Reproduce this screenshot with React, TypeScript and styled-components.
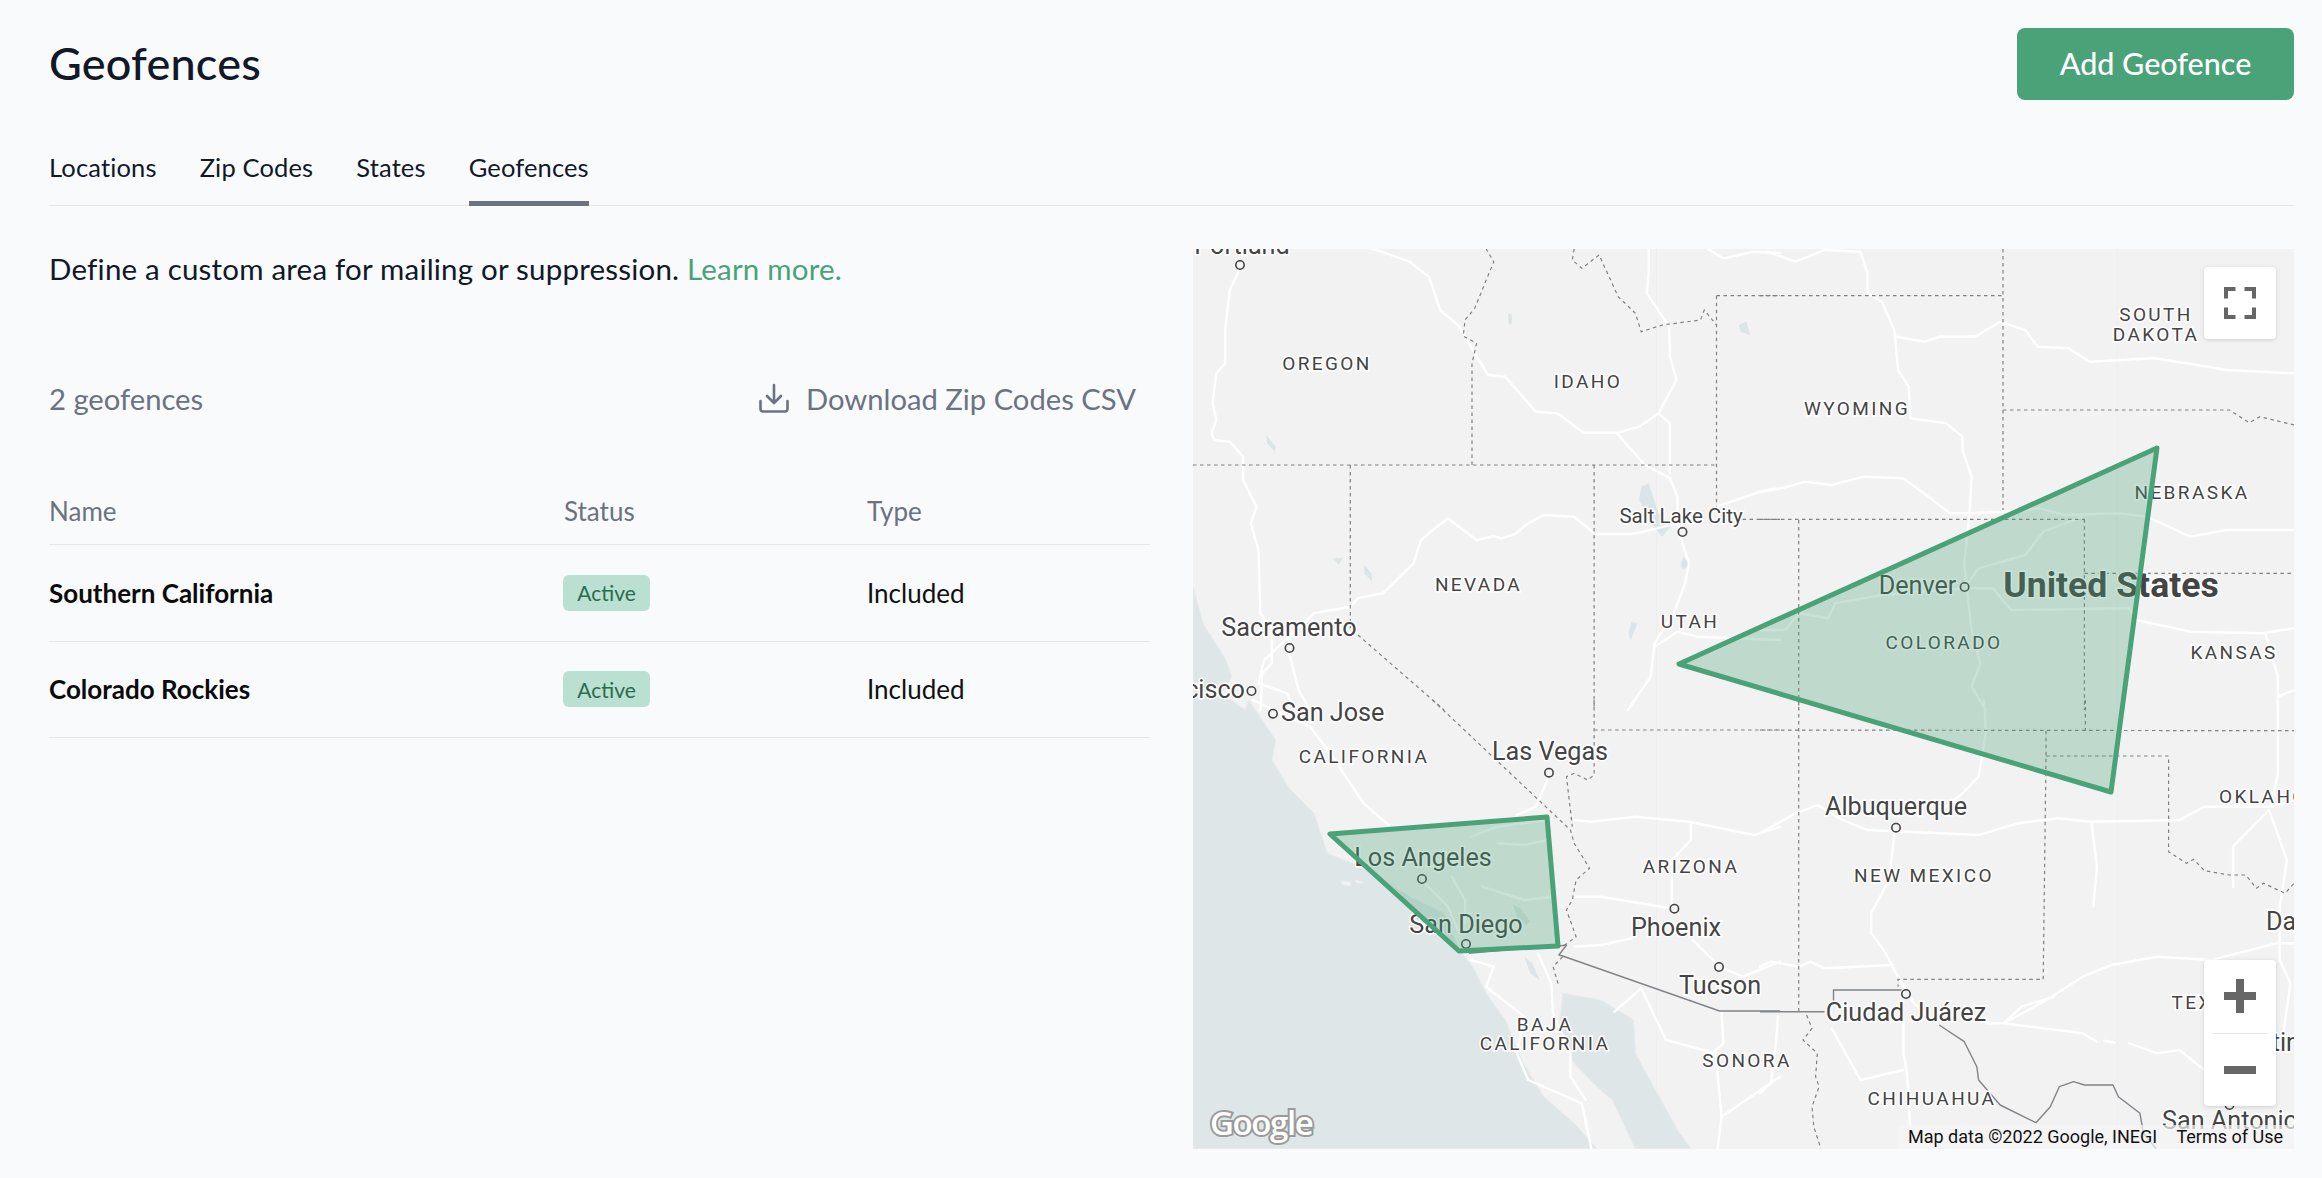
import React from 'react';
import styled, { createGlobalStyle } from 'styled-components';

const Global = createGlobalStyle`
  html, body { margin: 0; padding: 0; background: #f9fafc; }
  body { font-family: Lato, "Open Sans", sans-serif; color: #111827; overflow: hidden; }
  * { box-sizing: border-box; }
`;

const Page = styled.div`
  width: 2322px;
  height: 1178px;
  padding: 28px 28px 29px 49px;
  display: flex;
  flex-direction: column;
`;
const Header = styled.header`
  display: flex;
  justify-content: space-between;
  align-items: center;
  height: 72px;
`;
const Title = styled.h1`
  margin: 0 0 3px;
  font-size: 45px;
  font-weight: 500;
  color: #111827;
  letter-spacing: 0.2px;
`;
const PrimaryButton = styled.button`
  width: 277px;
  height: 72px;
  padding: 0 0 3px;
  border: 0;
  border-radius: 8px;
  background: #4aa278;
  color: #fff;
  font: 500 30.5px Lato, sans-serif;
`;
const Tabs = styled.nav`
  display: flex;
  gap: 43px;
  height: 58px;
  margin-top: 48px;
  border-bottom: 1px solid #e5e7eb;
`;
const Tab = styled.a<{ $active?: boolean }>`
  height: 58px;
  padding-top: 2px;
  font-size: 25.5px;
  letter-spacing: 0.15px;
  line-height: 34px;
  color: #111827;
  border-bottom: 5px solid ${p => (p.$active ? '#6b7280' : 'transparent')};
`;
const Body = styled.main`
  flex: 1;
  display: grid;
  grid-template-columns: 1101px 1101px;
  column-gap: 43px;
  margin-top: 43px;
  min-height: 0;
`;
const Left = styled.section`
  display: flex;
  flex-direction: column;
`;
const Intro = styled.p`
  margin: -2px 0 0;
  height: 44px;
  font-size: 29.5px;
  letter-spacing: 0.2px;
  line-height: 44px;
  color: #111827;
`;
const Learn = styled.a`
  color: #4aa278;
`;
const Toolbar = styled.div`
  display: flex;
  justify-content: space-between;
  align-items: center;
  height: 44px;
  margin-top: 85px;
  padding-right: 14px;
  font-size: 29.2px;
  color: #6b7280;
`;
const Download = styled.span`
  display: flex;
  align-items: center;
  gap: 17px;
`;
const Row = styled.div<{ $head?: boolean }>`
  display: grid;
  grid-template-columns: 515px 303px 1fr;
  align-items: ${p => (p.$head ? 'end' : 'center')};
  height: ${p => (p.$head ? '100px' : '96.5px')};
  padding-bottom: ${p => (p.$head ? '17px' : '0')};
  border-bottom: 1px solid #e5e7eb;
  font-size: 26px;
  color: ${p => (p.$head ? '#6b7280' : '#111')};
`;
const TableWrap = styled.div`
  margin-top: 25px;
`;
const Name = styled.span`
  font-weight: 700;
  color: #0b0b0b;
`;
const Badge = styled.span`
  display: inline-flex;
  align-items: center;
  justify-content: center;
  width: 87px;
  height: 36px;
  margin-left: -1px;
  border-radius: 6px;
  background: #b9e0d0;
  color: #2c6b4e;
  font-size: 21px;
`;
const MapPanel = styled.section`
  position: relative;
  overflow: hidden;
  background: #f2f2f2;
  height: 900px;
`;
const MapSvg = styled.svg`
  display: block;
  width: 1101px;
  height: 900px;
`;
const Label = styled.text<{ $kind: 'state' | 'city' | 'small' | 'country' }>`
  font-family: Roboto, sans-serif;
  dominant-baseline: central;
  fill: #444;
  stroke: #fff;
  stroke-width: 3px;
  paint-order: stroke;
  font-size: ${p => ({ state: 19, city: 25.2, small: 20.5, country: 35.6 })[p.$kind]}px;
  font-weight: ${p => (p.$kind === 'country' ? 700 : 450)};
  letter-spacing: ${p => (p.$kind === 'state' ? '2.4px' : '0')};
`;
const GoogleMark = styled.text`
  font-family: "Open Sans", sans-serif;
  font-size: 33px;
  font-weight: 600;
  letter-spacing: -1.4px;
  fill: #fff;
  stroke: #9a9a9a;
  stroke-width: 4px;
  paint-order: stroke;
`;
const ControlCard = styled.div`
  position: absolute;
  right: 18px;
  width: 72px;
  background: #fff;
  border-radius: 4px;
  box-shadow: 0 1px 4px rgba(0, 0, 0, 0.15);
  display: flex;
  flex-direction: column;
  align-items: center;
`;
const FullscreenCard = styled(ControlCard)`
  top: 18px;
  height: 72px;
  justify-content: center;
`;
const ZoomCard = styled(ControlCard)`
  bottom: 43px;
  height: 146px;
`;
const ZoomBtn = styled.div`
  flex: 1;
  width: 100%;
  display: flex;
  align-items: center;
  justify-content: center;
`;
const ZoomRule = styled.div`
  width: 54px;
  height: 1px;
  background: #e6e6e6;
`;
const Attribution = styled.div`
  position: absolute;
  right: 0;
  bottom: 0;
  height: 24px;
  width: 396px;
  padding: 0 11px 2px 10px;
  display: flex;
  justify-content: space-between;
  align-items: center;
  background: rgba(245, 245, 245, 0.7);
  font: 400 18px Roboto, sans-serif;
  color: #111;
  white-space: nowrap;
`;

type Pt = [number, number];
const frame = (ox: number, oy: number, sx: number) => (v: number[]): Pt[] => {
  const out: Pt[] = [];
  for (let i = 0; i < v.length; i += 2) out.push([ox + v[i] / sx, oy + v[i + 1] / 3]);
  return out;
};
const z3 = frame(1180, 230, 2.613);
const z4 = frame(1760, 230, 2.79);
const z5 = frame(1180, 700, 2.613);
const z6 = frame(1760, 700, 2.79);
const d = (p: Pt[], close = false) =>
  'M' + p.map(q => q[0].toFixed(1) + ' ' + q[1].toFixed(1)).join('L') + (close ? 'Z' : '');

const water = [
  d([...z3([34, 1070, 60, 1180, 120, 1290, 135, 1340, 110, 1390, 170, 1440]),
     ...z5([180, 0, 250, 120, 240, 180, 285, 265, 350, 340, 385, 460, 450, 490, 520, 530, 600, 590, 690, 640, 730, 750, 765, 800, 800, 880, 850, 960, 895, 1085, 950, 1190, 1030, 1270, 1090, 1346, 34, 1346])], true),
  d(z5([1000, 880, 1100, 900, 1185, 960, 1190, 1060, 1235, 1155, 1300, 1290, 1335, 1346, 1190, 1346, 1130, 1200, 1090, 1160, 1030, 1090, 990, 1000]), true),
];
const lakes = [
  d(z3([1205, 770, 1225, 760, 1250, 850, 1285, 885, 1260, 920, 1230, 880, 1200, 810]), true),
  d(z3([1315, 980, 1332, 1000, 1315, 1020, 1308, 1005]), true),
  d(z3([225, 615, 250, 650, 248, 665, 228, 640]), true),
  d(z3([480, 1005, 500, 1030, 502, 1055, 482, 1030]), true),
  d(z3([400, 985, 425, 985, 415, 1005]), true),
  d(z3([858, 250, 868, 255, 866, 285, 858, 280]), true),
  d(z3([1180, 1175, 1195, 1180, 1178, 1230, 1172, 1210]), true),
  d(z4([1455, 0, 1490, 0, 1490, 60, 1478, 30]), true),
  d(z5([870, 615, 890, 625, 915, 665, 905, 675, 880, 650]), true),
  d(z5([900, 770, 920, 790, 940, 840, 915, 820]), true),
  d(z3([1460, 285, 1480, 275, 1490, 315, 1465, 305]), true),
];
const islands = [
  d(z5([420, 545, 445, 545, 445, 558, 425, 555]), true),
  d(z5([458, 540, 485, 548, 462, 550]), true),
];
const roads = [
  z3([158, 110, 130, 180, 118, 300, 118, 400, 95, 430, 85, 520, 95, 570, 82, 610, 90, 630, 130, 635, 165, 680, 165, 750, 200, 830, 185, 880, 205, 960, 210, 1150, 240, 1200, 240, 1300, 215, 1330, 210, 1440]),
  z3([450, 50, 500, 55, 600, 95, 650, 140, 680, 240, 730, 290, 765, 360, 805, 435, 850, 440, 930, 545, 985, 550, 1055, 608, 1145, 608, 1200, 590, 1250, 550, 1280, 580, 1280, 730]),
  z3([1140, 608, 1215, 705, 1280, 745, 1300, 800, 1300, 870, 1310, 930, 1330, 1000, 1320, 1060, 1290, 1150, 1240, 1240, 1230, 1340, 1170, 1440]),
  z3([1250, 550, 1298, 450, 1280, 380, 1278, 290, 1220, 190, 1225, 120, 1225, 57]),
  z3([1300, 880, 1210, 905, 1180, 912, 1085, 912, 1030, 860, 950, 855, 910, 880, 875, 912, 840, 925, 820, 918, 775, 930, 700, 865, 660, 900, 630, 930, 610, 1000, 530, 1090, 465, 1105, 445, 1130, 350, 1150, 285, 1220, 285, 1270, 310, 1380, 340, 1440]),
  z3([1240, 1250, 1300, 1205, 1350, 1220, 1568, 1230]),
  z3([1402, 830, 1530, 780, 1568, 775]),
  z3([1380, 57, 1420, 85, 1500, 65, 1568, 70]),
  z3([285, 1220, 220, 1290, 205, 1360, 280, 1390, 300, 1440]),
  z4([0, 785, 60, 775, 125, 755, 200, 765, 290, 740, 400, 745, 470, 800, 530, 850, 590, 850, 680, 845, 780, 835, 850, 855, 1000, 850, 1080, 860, 1200, 920, 1300, 900, 1490, 900]),
  z4([180, 60, 280, 65, 300, 130, 300, 190, 340, 215, 375, 300, 385, 420, 415, 470, 420, 565, 520, 580, 565, 620, 565, 660, 590, 740, 585, 850, 570, 1000, 590, 1200, 615, 1300, 590, 1370, 630, 1440]),
  z4([20, 65, 100, 95, 180, 60]),
  z4([380, 320, 460, 335, 500, 320, 600, 320, 670, 275, 740, 300, 775, 350, 860, 355, 920, 395, 1100, 385, 1220, 405, 1300, 420, 1490, 430]),
  z4([0, 1200, 70, 1200, 110, 1150, 190, 1165, 210, 1120, 340, 1095, 570, 1075, 650, 1075, 700, 1140, 1030, 1135, 1050, 1170, 1200, 1205, 1400, 1210, 1490, 1195]),
  z4([1410, 1210, 1445, 1340, 1445, 1440]),
  z4([1445, 1400, 1490, 1380]),
  z4([570, 1075, 610, 1015, 740, 975, 790, 905, 900, 860]),
  z6([1445, 0, 1445, 220, 1425, 320]),
  z6([625, 0, 630, 100, 610, 230, 560, 285, 490, 345]),
  z6([0, 400, 100, 340, 160, 315, 230, 360, 300, 390, 610, 405, 720, 370, 830, 355, 920, 365, 1170, 360, 1240, 320, 1430, 320, 1490, 300]),
  z6([925, 370, 940, 500, 930, 620]),
  z6([1420, 330, 1320, 440, 1320, 560]),
  z6([1420, 330, 1470, 480, 1450, 620, 1450, 780, 1480, 850, 1460, 1000]),
  z6([375, 400, 360, 540, 310, 640, 310, 700, 345, 750, 385, 830, 430, 910, 470, 950]),
  z6([0, 800, 30, 785, 110, 800, 140, 785, 180, 805, 370, 795]),
  z6([680, 970, 800, 900, 900, 830, 980, 795, 1110, 770, 1260, 780, 1440, 730, 1490, 730]),
  z6([630, 970, 680, 970, 900, 1000, 940, 1025]),
  z6([960, 1022, 990, 1028]),
  z6([1030, 1030, 1110, 1060, 1170, 1050, 1240, 1110]),
  z6([680, 970, 730, 920, 820, 890]),
  z6([400, 960, 400, 1060, 410, 1120, 420, 1300]),
  z6([200, 985, 280, 1140, 400, 1110]),
  z6([50, 950, 45, 1030, 30, 1150, 0, 1180]),
  z5([1030, 360, 1075, 365, 1190, 350, 1330, 365, 1500, 405, 1568, 380]),
  z5([1335, 370, 1335, 420, 1285, 480, 1285, 620]),
  z5([1030, 590, 1100, 590, 1280, 625]),
  z5([1030, 740, 1100, 735, 1180, 715]),
  z5([1340, 720, 1410, 800, 1470, 830, 1568, 785]),
  z5([1205, 865, 1135, 935]),
  z5([1205, 865, 1270, 1020, 1400, 1060, 1415, 1250, 1405, 1346]),
  z5([1415, 1250, 1568, 1130]),
  z5([1415, 935, 1420, 1030, 1390, 1060]),
  z5([760, 780, 820, 800, 800, 860, 900, 950, 880, 1060, 910, 1140, 1050, 1210, 1075, 1346]),
  z5([935, 760, 970, 850, 975, 940, 1020, 1060, 1020, 1130, 1060, 1200]),
  z5([960, 240, 930, 320, 880, 345]),
  z5([410, 190, 480, 310, 545, 375]),
  z5([190, 0, 340, 80, 420, 200]),
  z5([760, 410, 830, 380, 960, 360]),
  z5([830, 430, 900, 435, 960, 420]),
  z5([710, 530, 745, 600, 745, 670]),
  z5([790, 560, 900, 600, 975, 590]),
  z5([640, 550, 700, 620, 730, 700]),
];
const borders = [
  z3([34, 705, 1402, 705]),
  z3([763, 705, 763, 400, 775, 340, 740, 318, 745, 270, 770, 235, 820, 95, 800, 57]),
  z3([445, 705, 445, 1195]),
  z3([465, 1215, 690, 1440]),
  z3([1082, 705, 1082, 1440]),
  z3([1030, 57, 1025, 90, 1050, 115, 1095, 75, 1145, 200, 1190, 250, 1205, 305, 1260, 285, 1360, 270, 1370, 240, 1402, 285]),
  z3([1402, 197, 1402, 830]),
  z3([1402, 197, 1568, 197]),
  z3([1470, 868, 1568, 868]),
  z4([0, 197, 678, 197]),
  z4([678, 57, 678, 840]),
  z4([678, 540, 1310, 540, 1365, 578, 1395, 560, 1490, 585]),
  z4([0, 868, 905, 868]),
  z4([108, 870, 108, 1440]),
  z4([905, 868, 905, 1440]),
  z4([905, 1030, 1490, 1030]),
  z6([108, 0, 108, 935]),
  z6([908, 0, 908, 92]),
  z6([0, 90, 1490, 92]),
  z6([798, 92, 798, 170, 790, 838, 385, 838, 385, 860]),
  z6([798, 168, 1140, 168, 1140, 455, 1190, 490, 1210, 478, 1240, 512, 1310, 525, 1355, 525, 1385, 565, 1405, 550, 1465, 580, 1490, 550]),
  z6([130, 945, 145, 985, 120, 1020, 160, 1060, 155, 1130, 165, 1160, 145, 1220, 150, 1280, 170, 1346]),
  z5([1082, 0, 1082, 225, 1065, 240, 1030, 220, 1010, 230, 1025, 380]),
  z5([1082, 90, 1568, 90]),
  z5([660, 0, 1020, 390, 1030, 430, 1070, 505, 1035, 540, 1025, 600, 1010, 630, 1035, 710, 1000, 740]),
  z5([1000, 770, 975, 800, 990, 860]),
];
const nationLines = [
  z5([755, 760, 900, 745]),
  z5([990, 738, 1010, 735, 990, 765, 1000, 768, 1410, 933, 1568, 933]),
  z6([0, 935, 180, 935]),
  z6([205, 905, 205, 870, 395, 870]),
  z6([500, 975, 570, 1025, 605, 1100, 610, 1140, 670, 1215, 770, 1268, 810, 1220, 835, 1160, 875, 1145, 905, 1155, 985, 1155, 1000, 1190, 1060, 1240, 1070, 1300, 1105, 1346]),
];

type Kind = 'state' | 'city' | 'small' | 'country';
const labels: { t: string; x: number; y: number; k: Kind; a?: 'start' | 'middle' | 'end' }[] = [
  { t: 'Portland', x: 1242, y: 245, k: 'city' },
  { t: 'OREGON', x: 1327, y: 363, k: 'state' },
  { t: 'IDAHO', x: 1588, y: 381, k: 'state' },
  { t: 'WYOMING', x: 1857, y: 408, k: 'state' },
  { t: 'SOUTH', x: 2156, y: 314, k: 'state' },
  { t: 'DAKOTA', x: 2156, y: 334, k: 'state' },
  { t: 'NEBRASKA', x: 2192, y: 492, k: 'state' },
  { t: 'Denver', x: 1917.5, y: 585.5, k: 'city' },
  { t: 'United States', x: 2111, y: 585, k: 'country' },
  { t: 'COLORADO', x: 1944, y: 642, k: 'state' },
  { t: 'KANSAS', x: 2234, y: 652, k: 'state' },
  { t: 'Salt Lake City', x: 1681, y: 516, k: 'small' },
  { t: 'NEVADA', x: 1478.5, y: 584, k: 'state' },
  { t: 'UTAH', x: 1690, y: 621, k: 'state' },
  { t: 'Sacramento', x: 1289, y: 627.5, k: 'city' },
  { t: 'San Francisco', x: 1245, y: 689.5, k: 'city', a: 'end' },
  { t: 'San Jose', x: 1281, y: 712.5, k: 'city', a: 'start' },
  { t: 'CALIFORNIA', x: 1364, y: 756, k: 'state' },
  { t: 'Las Vegas', x: 1550, y: 751.5, k: 'city' },
  { t: 'ARIZONA', x: 1691, y: 866, k: 'state' },
  { t: 'Los Angeles', x: 1423, y: 857.5, k: 'city' },
  { t: 'San Diego', x: 1466, y: 924.5, k: 'city' },
  { t: 'Phoenix', x: 1676, y: 927.5, k: 'city' },
  { t: 'Tucson', x: 1720, y: 985.5, k: 'city' },
  { t: 'BAJA', x: 1545, y: 1024, k: 'state' },
  { t: 'CALIFORNIA', x: 1545, y: 1043, k: 'state' },
  { t: 'SONORA', x: 1747, y: 1060, k: 'state' },
  { t: 'Albuquerque', x: 1896, y: 806.5, k: 'city' },
  { t: 'NEW MEXICO', x: 1924, y: 875, k: 'state' },
  { t: 'OKLAHOMA', x: 2219, y: 796, k: 'state', a: 'start' },
  { t: 'Ciudad Juárez', x: 1906, y: 1012.5, k: 'city' },
  { t: 'CHIHUAHUA', x: 1932, y: 1098, k: 'state' },
  { t: 'TEXAS', x: 2171.5, y: 1002, k: 'state', a: 'start' },
  { t: 'Dallas', x: 2266, y: 921.5, k: 'city', a: 'start' },
  { t: 'Austin', x: 2300, y: 1042.5, k: 'city', a: 'end' },
  { t: 'San Antonio', x: 2162, y: 1120.5, k: 'city', a: 'start' },
];
const dots: Pt[] = [
  [1240, 265], [1964.6, 587], [1682.5, 532], [1289.5, 648], [1251.5, 691], [1273, 713.7], [1549, 772.7],
  [1422, 879], [1466, 944], [1674.4, 908.7], [1719, 967], [1896, 827.7], [1906, 994], [2229.5, 1105],
];
const fences = [
  '2157,448 1679,664 2111,792',
  '1330,834 1547,817 1558,946 1459,951',
];

export default function App() {
  return (
    <Page>
      <Global />
      <Header>
        <Title>Geofences</Title>
        <PrimaryButton>Add Geofence</PrimaryButton>
      </Header>
      <Tabs>
        <Tab>Locations</Tab>
        <Tab>Zip Codes</Tab>
        <Tab>States</Tab>
        <Tab $active>Geofences</Tab>
      </Tabs>
      <Body>
        <Left>
          <Intro>
            Define a custom area for mailing or suppression. <Learn>Learn more.</Learn>
          </Intro>
          <Toolbar>
            <span>2 geofences</span>
            <Download>
              <svg width="30" height="30" viewBox="0 0 30 30" fill="none" stroke="#6b7280" strokeWidth="2.6" strokeLinecap="round" strokeLinejoin="round">
                <path d="M15 2v17M8 13l7 7 7-7M1.500 18v8a2.500 2.500 0 0 0 2.500 2.500h22a2.500 2.500 0 0 0 2.500-2.500v-8" />
              </svg>
              Download Zip Codes CSV
            </Download>
          </Toolbar>
          <TableWrap>
            <Row $head>
              <span>Name</span>
              <span>Status</span>
              <span>Type</span>
            </Row>
            {['Southern California', 'Colorado Rockies'].map(n => (
              <Row key={n}>
                <Name>{n}</Name>
                <span>
                  <Badge>Active</Badge>
                </span>
                <span>Included</span>
              </Row>
            ))}
          </TableWrap>
        </Left>
        <MapPanel>
          <MapSvg viewBox="1193 249 1101 900">
            <rect x="1193" y="249" width="1101" height="900" fill="#f2f2f2" />
            <path d="M1656.500 249V1149M2117 249V1149" stroke="#eeeeee" strokeWidth="1" />
            {water.map((w, i) => (
              <path key={i} d={w} fill="#dfe6e8" stroke="#e6ebec" strokeWidth="1" strokeLinejoin="round" />
            ))}
            {lakes.map((w, i) => (
              <path key={i} d={w} fill="#dbe4e6" strokeLinejoin="round" />
            ))}
            {islands.map((w, i) => (
              <path key={i} d={w} fill="#f2f2f2" />
            ))}
            <g fill="none" stroke="#fff" strokeWidth="2.4" strokeLinejoin="round" strokeLinecap="round">
              {roads.map((r, i) => (
                <path key={i} d={d(r)} />
              ))}
            </g>
            <g fill="none" stroke="#808080" strokeWidth="1.2" strokeDasharray="3.5 3.5">
              {borders.map((r, i) => (
                <path key={i} d={d(r)} />
              ))}
            </g>
            <g fill="none" stroke="#808488" strokeWidth="1.4" strokeLinejoin="round">
              {nationLines.map((r, i) => (
                <path key={i} d={d(r)} />
              ))}
            </g>
            {labels.map(l => (
              <Label key={l.t + l.y} x={l.x} y={l.y} $kind={l.k} textAnchor={l.a ?? 'middle'}>
                {l.t}
              </Label>
            ))}
            <g fill="#f4f4f4" stroke="#444" strokeWidth="1.6">
              {dots.map((p, i) => (
                <circle key={i} cx={p[0]} cy={p[1]} r="4.2" />
              ))}
            </g>
            <g fill="#4aa278" fillOpacity="0.3" stroke="#4aa278" strokeWidth="5" strokeLinejoin="round">
              {fences.map(f => (
                <polygon key={f} points={f} />
              ))}
            </g>
            <GoogleMark x="1210" y="1135">Google</GoogleMark>
          </MapSvg>
          <FullscreenCard>
            <svg width="32" height="32" viewBox="0 0 32 32" fill="none" stroke="#666" strokeWidth="4">
              <path d="M2 11.500V2H11.500M20.500 2H30V11.500M2 20.500V30H11.500M20.500 30H30V20.500" />
            </svg>
          </FullscreenCard>
          <ZoomCard>
            <ZoomBtn>
              <svg width="32" height="34" viewBox="0 0 32 34" fill="#666">
                <path d="M12 0h8v13h12v8H20v13h-8V21H0v-8h12z" />
              </svg>
            </ZoomBtn>
            <ZoomRule />
            <ZoomBtn>
              <svg width="32" height="8" viewBox="0 0 32 8" fill="#666">
                <path d="M0 0h32v8H0z" />
              </svg>
            </ZoomBtn>
          </ZoomCard>
          <Attribution>
            <span>Map data ©2022 Google, INEGI</span>
            <span>Terms of Use</span>
          </Attribution>
        </MapPanel>
      </Body>
    </Page>
  );
}
